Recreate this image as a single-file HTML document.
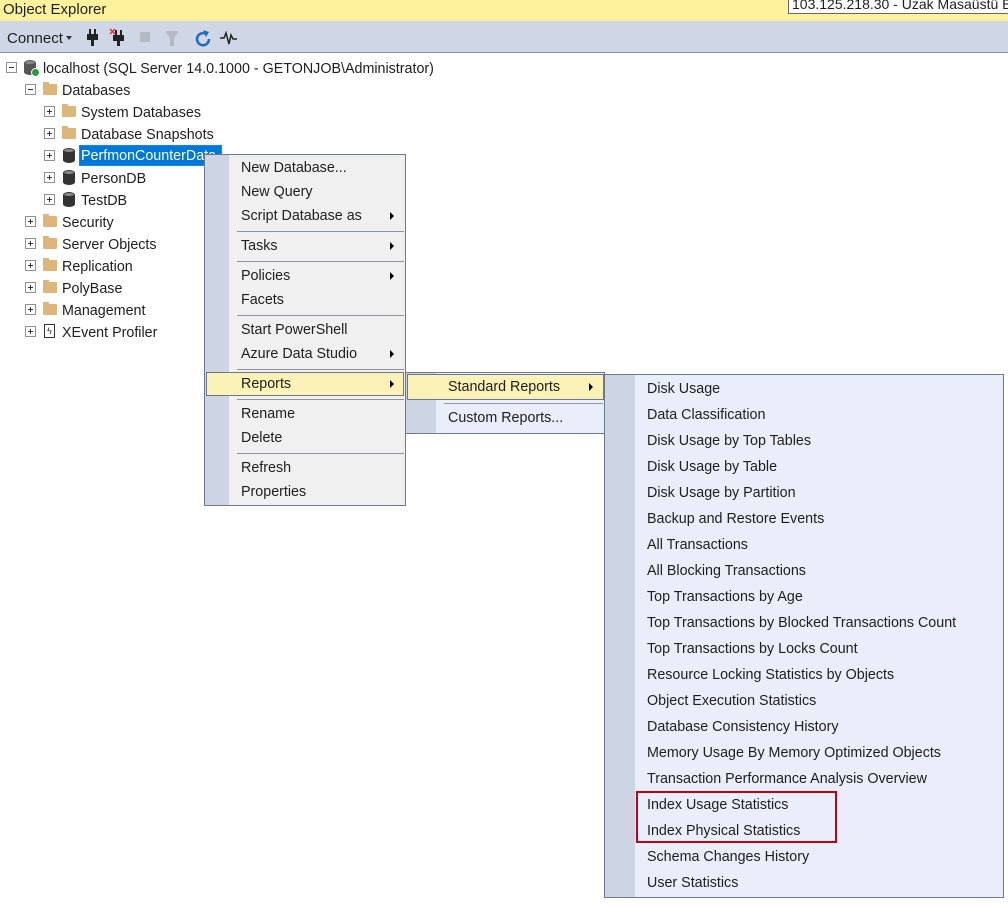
<!DOCTYPE html>
<html><head><meta charset="utf-8"><style>
*{margin:0;padding:0;box-sizing:border-box}
body{width:1008px;height:907px;background:#fff;font-family:"Liberation Sans",sans-serif;font-size:14.3px;color:#1e1e1e;position:relative;overflow:hidden}
.a{position:absolute;white-space:nowrap}
.t{line-height:22px}
.exp{position:absolute;width:11px;height:11px;border:1px solid #909090;background:#fff}
.exp:before{content:"";position:absolute;left:2px;top:4px;width:5px;height:1px;background:#333}
.exp.p:after{content:"";position:absolute;left:4px;top:2px;width:1px;height:5px;background:#333}
.fold{position:absolute;width:14px;height:11px;background:#dcb67a;border-radius:1px}
.fold:before{content:"";position:absolute;left:0;top:-2px;width:6px;height:3px;background:#dcb67a}
.db{position:absolute;width:12px;height:15px;background:#333;border-radius:6px/3px}
.db:before{content:"";position:absolute;left:1px;top:1px;width:10px;height:3px;border-radius:50%;background:#888}
.sep{position:absolute;height:1px;background:#8d93a2}
.arr{position:absolute;width:0;height:0;border-top:4px solid transparent;border-bottom:4px solid transparent;border-left:4px solid #000}
</style></head><body>
<div class="a" style="left:0;top:0;width:1008px;height:21px;background:#fff29d"></div>
<div class="a" style="left:3px;top:0;font-size:15px;line-height:20px">Object Explorer</div>
<div class="a" style="left:788px;top:-6px;width:230px;height:20px;background:#fff;border:1px solid #666;font-size:14px;line-height:18px;padding-left:3px">103.125.218.30 - Uzak Masaüstü B</div>
<div class="a" style="left:0;top:21px;width:1008px;height:32px;background:#cfd6e5;border-bottom:1px solid #8e8e8e"></div>
<div class="a" style="left:7px;top:29px;font-size:15px;line-height:20px;color:#1e1e1e">Connect</div>
<div class="arr" style="left:66px;top:36px;border:none;border-left:3px solid transparent;border-right:3px solid transparent;border-top:4px solid #333"></div>
<svg class="a" style="left:84px;top:28px" width="160" height="20">
<g fill="#222"><rect x="5" y="1" width="2" height="5"/><rect x="10" y="1" width="2" height="5"/><rect x="3" y="6" width="11" height="6"/><rect x="7" y="12" width="3" height="6"/></g>
<path d="M26 1 l5 5 M31 1 l-5 5" stroke="#d33" stroke-width="1.5"/>
<g fill="#222"><rect x="31" y="2" width="2" height="5"/><rect x="36" y="2" width="2" height="5"/><rect x="29" y="7" width="11" height="6"/><rect x="33" y="13" width="3" height="5"/></g>
<rect x="56" y="4" width="10" height="10" fill="#b5b9c2"/>
<path d="M81 3 h14 l-5 7 v8 h-4 v-8z" fill="#b5b9c2"/>
<path d="M122 6 a6 6 0 1 0 3 5" stroke="#1e6cc0" stroke-width="2.5" fill="none"/><path d="M119 2 l6 2 -3 5z" fill="#1e6cc0"/>
<path d="M136 10 h4 l2 -5 3 11 2 -9 2 4 h4" stroke="#222" stroke-width="1.5" fill="none"/>
</svg>

<!-- tree -->
<div class="exp" style="left:6px;top:62px"></div>
<div class="db" style="left:24px;top:60px;background:#555"></div><div class="a" style="left:31px;top:68px;width:9px;height:9px;border-radius:50%;background:#2c9a3c;border:1px solid #fff"></div>
<div class="a t" style="left:43px;top:58px">localhost (SQL Server 14.0.1000 - GETONJOB\Administrator)</div>
<div class="exp" style="left:25px;top:84px"></div><div class="fold" style="left:43px;top:84px"></div>
<div class="a t" style="left:62px;top:80px">Databases</div>
<div class="exp p" style="left:44px;top:106px"></div><div class="fold" style="left:62px;top:106px"></div>
<div class="a t" style="left:81px;top:102px">System Databases</div>
<div class="exp p" style="left:44px;top:128px"></div><div class="fold" style="left:62px;top:128px"></div>
<div class="a t" style="left:81px;top:124px">Database Snapshots</div>
<div class="exp p" style="left:44px;top:150px"></div><div class="db" style="left:63px;top:148px"></div>
<div class="a" style="left:79px;top:145px;width:143px;height:21px;background:#0078d7;border:1px dotted #c58"></div>
<div class="a t" style="left:81px;top:145px;color:#fff">PerfmonCounterData</div>
<div class="exp p" style="left:44px;top:172px"></div><div class="db" style="left:63px;top:170px"></div>
<div class="a t" style="left:81px;top:168px">PersonDB</div>
<div class="exp p" style="left:44px;top:194px"></div><div class="db" style="left:63px;top:192px"></div>
<div class="a t" style="left:81px;top:190px">TestDB</div>
<div class="exp p" style="left:25px;top:216px"></div><div class="fold" style="left:43px;top:216px"></div><div class="a t" style="left:62px;top:212px">Security</div>
<div class="exp p" style="left:25px;top:238px"></div><div class="fold" style="left:43px;top:238px"></div><div class="a t" style="left:62px;top:234px">Server Objects</div>
<div class="exp p" style="left:25px;top:260px"></div><div class="fold" style="left:43px;top:260px"></div><div class="a t" style="left:62px;top:256px">Replication</div>
<div class="exp p" style="left:25px;top:282px"></div><div class="fold" style="left:43px;top:282px"></div><div class="a t" style="left:62px;top:278px">PolyBase</div>
<div class="exp p" style="left:25px;top:304px"></div><div class="fold" style="left:43px;top:304px"></div><div class="a t" style="left:62px;top:300px">Management</div>
<div class="exp p" style="left:25px;top:326px"></div><div class="a" style="left:44px;top:324px;width:11px;height:14px;border:1px solid #333;font-size:9px;line-height:12px;text-align:center">ϟ</div><div class="a t" style="left:62px;top:322px">XEvent Profiler</div>

<!-- menu 1 -->
<div class="a" style="left:204px;top:154px;width:202px;height:352px;background:#f0f0f0;border:1px solid #6c7891"></div>
<div class="a" style="left:205px;top:155px;width:24px;height:350px;background:#cdd4e3"></div>
<div class="a t" style="left:241px;top:157px">New Database...</div>
<div class="a t" style="left:241px;top:181px">New Query</div>
<div class="a t" style="left:241px;top:205px">Script Database as</div><div class="arr" style="left:390px;top:212px"></div>
<div class="sep" style="left:237px;top:231px;width:167px"></div>
<div class="a t" style="left:241px;top:235px">Tasks</div><div class="arr" style="left:390px;top:242px"></div>
<div class="sep" style="left:237px;top:261px;width:167px"></div>
<div class="a t" style="left:241px;top:265px">Policies</div><div class="arr" style="left:390px;top:272px"></div>
<div class="a t" style="left:241px;top:289px">Facets</div>
<div class="sep" style="left:237px;top:315px;width:167px"></div>
<div class="a t" style="left:241px;top:319px">Start PowerShell</div>
<div class="a t" style="left:241px;top:343px">Azure Data Studio</div><div class="arr" style="left:390px;top:350px"></div>
<div class="sep" style="left:237px;top:369px;width:167px"></div>
<div class="a" style="left:206px;top:372px;width:198px;height:24px;background:#fbf2b8;border:1px solid #6c7891"></div>
<div class="a t" style="left:241px;top:373px">Reports</div><div class="arr" style="left:390px;top:380px"></div>
<div class="sep" style="left:237px;top:399px;width:167px"></div>
<div class="a t" style="left:241px;top:403px">Rename</div>
<div class="a t" style="left:241px;top:427px">Delete</div>
<div class="sep" style="left:237px;top:453px;width:167px"></div>
<div class="a t" style="left:241px;top:457px">Refresh</div>
<div class="a t" style="left:241px;top:481px">Properties</div>

<!-- menu 2 -->
<div class="a" style="left:405px;top:372px;width:200px;height:62px;background:#e9eefa;border:1px solid #6c7891"></div>
<div class="a" style="left:406px;top:373px;width:30px;height:60px;background:#cdd4e3"></div>
<div class="a" style="left:407px;top:374px;width:197px;height:26px;background:#fbf2b8;border:1px solid #6c7891"></div>
<div class="a t" style="left:448px;top:376px">Standard Reports</div><div class="arr" style="left:589px;top:383px"></div>
<div class="sep" style="left:444px;top:403px;width:159px"></div>
<div class="a t" style="left:448px;top:407px">Custom Reports...</div>

<!-- menu 3 -->
<div class="a" style="left:604px;top:374px;width:400px;height:524px;background:#e9eefa;border:1px solid #6c7891"></div>
<div class="a" style="left:605px;top:375px;width:30px;height:522px;background:#cdd4e3"></div>
<div class="a" style="left:647px;top:376px;line-height:26px">
Disk Usage<br>Data Classification<br>Disk Usage by Top Tables<br>Disk Usage by Table<br>Disk Usage by Partition<br>Backup and Restore Events<br>All Transactions<br>All Blocking Transactions<br>Top Transactions by Age<br>Top Transactions by Blocked Transactions Count<br>Top Transactions by Locks Count<br>Resource Locking Statistics by Objects<br>Object Execution Statistics<br>Database Consistency History<br>Memory Usage By Memory Optimized Objects<br>Transaction Performance Analysis Overview<br>Index Usage Statistics<br>Index Physical Statistics<br>Schema Changes History<br>User Statistics</div>
<div class="a" style="left:636px;top:791px;width:201px;height:52px;border:2px solid #c00010"></div>
</body></html>
